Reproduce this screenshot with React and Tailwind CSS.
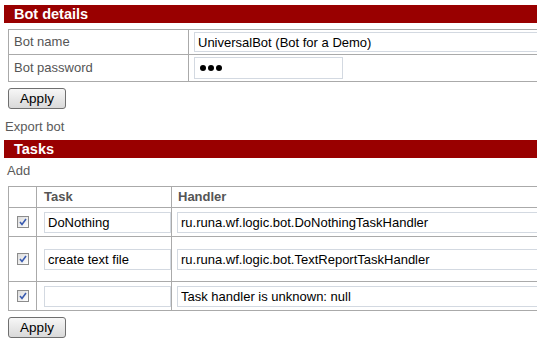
import React from 'react';

const inputCls =
  'block border border-[#d3d9e1] bg-white px-[3px] text-[13px] text-black outline-none';

const Bar = ({ children }) => (
  <div className="ml-[4px] w-[700px] h-[18px] bg-[#990000] pl-[10px] text-[14.5px] font-bold leading-[18px] text-white">
    {children}
  </div>
);

const ApplyButton = () => (
  <button className="ml-[8px] block w-[58px] h-[21px] rounded-[3px] border border-[#6f6f6f] bg-linear-to-b from-[#f7f7f7] to-[#d9d9d9] text-[13.5px] leading-none text-black">
    Apply
  </button>
);

const Check = () => (
  <div className="w-[12px] h-[12px] border border-[#8c8c8c] bg-linear-to-br from-[#dcdcdc] to-[#ffffff] flex items-center justify-center">
    <svg width="8" height="8" viewBox="0 0 8 8">
      <path d="M1 4 L3 6.5 L7 1" fill="none" stroke="#3a5bb0" strokeWidth="1.6" />
    </svg>
  </div>
);

const tasks = [
  { name: 'DoNothing', handler: 'ru.runa.wf.logic.bot.DoNothingTaskHandler', h: 'h-[28px]' },
  { name: 'create text file', handler: 'ru.runa.wf.logic.bot.TextReportTaskHandler', h: 'h-[44px]' },
  { name: '', handler: 'Task handler is unknown: null', h: 'h-[28px]' },
];

export default function App() {
  return (
    <div className="w-[537px] h-[345px] overflow-hidden bg-white pt-[5px] text-[13px] font-['Liberation_Sans',Arial,sans-serif]">
      {/* Bot details */}
      <Bar>Bot details</Bar>
      <table className="mt-[6px] ml-[8px] w-[700px] border-collapse">
        <tbody>
          <tr>
            <td className="w-[180px] border border-[#aaaaaa] p-0">
              <div className="h-[24px] flex items-center pl-[5px] text-[#555555]">Bot name</div>
            </td>
            <td className="border border-[#aaaaaa] p-0">
              <div className="h-[24px] flex items-center pl-[5px]">
                <input className={`${inputCls} w-[480px] h-[20px]`} defaultValue="UniversalBot (Bot for a Demo)" readOnly />
              </div>
            </td>
          </tr>
          <tr>
            <td className="border border-[#aaaaaa] p-0">
              <div className="h-[26px] flex items-center pl-[5px] text-[#555555]">Bot password</div>
            </td>
            <td className="border border-[#aaaaaa] p-0">
              <div className="h-[26px] flex items-center pl-[5px]">
                <div className="w-[149px] h-[22px] border border-[#d3d9e1] flex items-center gap-[2px] pl-[5px]">
                  <span className="w-[6px] h-[6px] rounded-full bg-black" />
                  <span className="w-[6px] h-[6px] rounded-full bg-black" />
                  <span className="w-[6px] h-[6px] rounded-full bg-black" />
                </div>
              </div>
            </td>
          </tr>
        </tbody>
      </table>
      <div className="mt-[6px]">
        <ApplyButton />
      </div>
      <div className="mt-[10px] ml-[5px] leading-[15px] text-[#5a5a5a]">Export bot</div>

      {/* Tasks */}
      <div className="mt-[6px]">
        <Bar>Tasks</Bar>
      </div>
      <div className="mt-[5px] ml-[7px] leading-[15px] text-[#5a5a5a]">Add</div>
      <table className="mt-[8px] ml-[8px] w-[700px] border-collapse">
        <tbody>
          <tr>
            <td className="w-[28px] border border-[#aaaaaa] p-0">
              <div className="h-[20px]" />
            </td>
            <td className="w-[132px] border border-[#aaaaaa] p-0">
              <div className="h-[20px] flex items-center pl-[7px] font-bold text-[#555555]">Task</div>
            </td>
            <td className="border border-[#aaaaaa] p-0">
              <div className="h-[20px] flex items-center pl-[6px] font-bold text-[#555555]">Handler</div>
            </td>
          </tr>
          {tasks.map((t, i) => (
            <tr key={i}>
              <td className="border border-[#aaaaaa] p-0">
                <div className={`${t.h} flex items-center justify-center`}>
                  <Check />
                </div>
              </td>
              <td className="border border-[#aaaaaa] p-0">
                <div className={`${t.h} flex items-center pl-[7px]`}>
                  <input className={`${inputCls} w-[127px] h-[21px]`} defaultValue={t.name} readOnly />
                </div>
              </td>
              <td className="border border-[#aaaaaa] p-0">
                <div className={`${t.h} flex items-center pl-[5px]`}>
                  <input className={`${inputCls} w-[480px] h-[21px]`} defaultValue={t.handler} readOnly />
                </div>
              </td>
            </tr>
          ))}
        </tbody>
      </table>
      <div className="mt-[6px]">
        <ApplyButton />
      </div>
    </div>
  );
}
